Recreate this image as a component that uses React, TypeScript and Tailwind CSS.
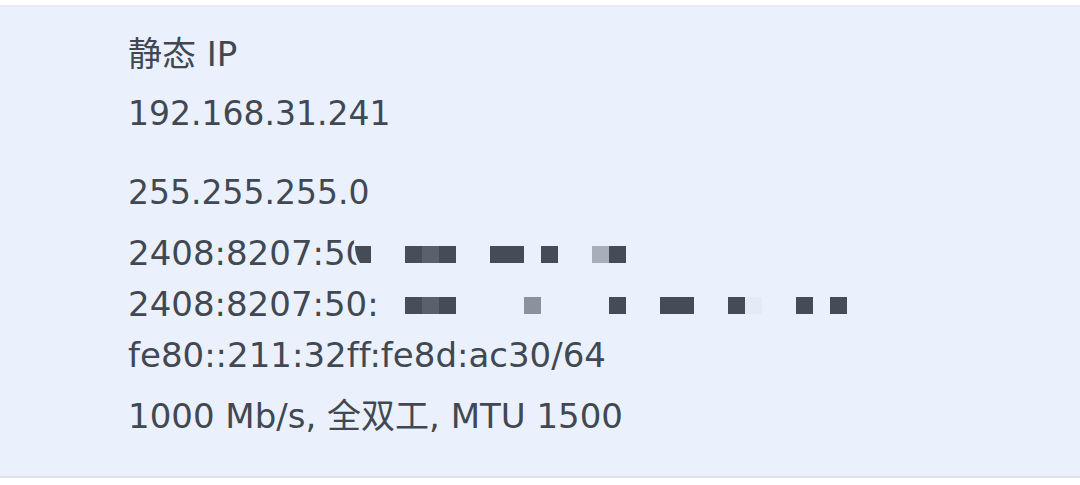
type Cell = { x: number; span?: number; fill: string };

const INK = "#454c56";

const firstMask: Cell[] = [
  { x: 3, fill: "#474e58" },
  { x: 4, fill: "#59616b" },
  { x: 5, fill: INK },
  { x: 8, span: 2, fill: INK },
  { x: 11, fill: INK },
  { x: 14, fill: "#a8afb9" },
  { x: 15, fill: INK },
];

const secondMask: Cell[] = [
  { x: 3, fill: "#474e58" },
  { x: 4, fill: "#59616b" },
  { x: 5, fill: INK },
  { x: 10, fill: "#8b929c" },
  { x: 15, fill: INK },
  { x: 18, span: 2, fill: INK },
  { x: 22, fill: INK },
  { x: 23, fill: "#e5ebf5" },
  { x: 26, fill: INK },
  { x: 28, fill: INK },
];

function Mosaic({ cells, covers = false }: { cells: Cell[]; covers?: boolean }) {
  return (
    <svg
      className="absolute left-[226px] top-0"
      width="493"
      height="51"
      viewBox="0 0 493 51"
      aria-hidden="true"
    >
      {covers && (
        <>
          <path d="M2 8C-3 18 -2 32 6 42H30V8Z" fill="#eaf1fc" />
          <path d="M1 18H17V35H6Q1 28 1 18Z" fill={INK} />
        </>
      )}
      {cells.map((c) => (
        <rect key={c.x} x={c.x * 17} y="18" width={(c.span ?? 1) * 17} height="17" fill={c.fill} />
      ))}
    </svg>
  );
}

export default function App() {
  return (
    <main className="bg-white pt-[5px] font-['DejaVu_Sans','Noto_Sans_CJK_SC',sans-serif]">
      <section className="border-b-2 border-t-2 border-b-[#dce3ef] border-t-[#e9ebf2] bg-[#eaf1fc] pb-[34px] pl-32 pt-[22px] leading-[51px] text-[#414852] [font-variant-ligatures:none]">
        <p className="mb-2 text-[34px] leading-[51px]">静态 IP</p>
        <p className="mb-7 text-[33px] leading-[51px]">192.168.31.241</p>
        <p className="mb-[10px] text-[33px] leading-[51px]">255.255.255.0</p>
        <ul className="mb-[10px] text-[34px] leading-[51px]">
          <li className="relative">
            2408:8207:50
            <Mosaic cells={firstMask} covers />
          </li>
          <li className="relative">
            2408:8207:50:
            <Mosaic cells={secondMask} />
          </li>
          <li>fe80::211:32ff:fe8d:ac30/64</li>
        </ul>
        <p className="text-[34px] leading-[51px]">1000 Mb/s, 全双工, MTU 1500</p>
      </section>
    </main>
  );
}
